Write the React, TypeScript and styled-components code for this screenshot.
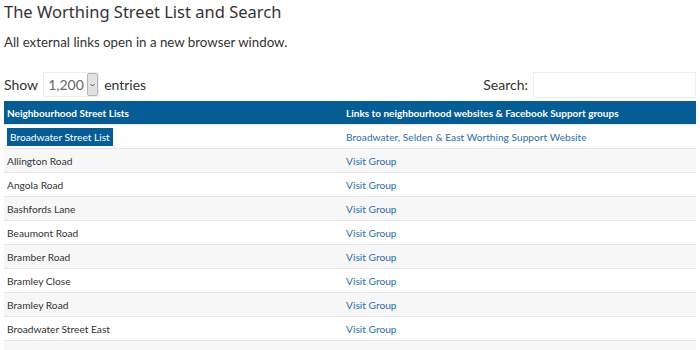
import styled, { createGlobalStyle } from "styled-components";

const GlobalStyle = createGlobalStyle`
  body {
    margin: 0;
    background: #ffffff;
    font-family: Lato, "Noto Sans", sans-serif;
    color: #333333;
  }
`;

const Page = styled.div`
  padding: 0 4px;
`;

const Title = styled.h2`
  margin: 0;
  padding-top: 1px;
  font-family: "Noto Sans", sans-serif;
  font-weight: 400;
  font-size: 16.5px;
  line-height: 22px;
  color: #333;
`;

const Intro = styled.p`
  margin: 9px 0 0;
  font-size: 13.3px;
  line-height: 20px;
  color: #333;
`;

const Controls = styled.div`
  display: flex;
  align-items: center;
  justify-content: space-between;
  margin-top: 19px;
  height: 27px;
  margin-bottom: 3px;
`;

const Length = styled.label`
  display: flex;
  align-items: center;
  gap: 5px;
  font-size: 14px;
`;

const SelectBox = styled.div`
  display: flex;
  align-items: stretch;
  height: 25px;
  width: 56px;
  border: 1px solid #eeeeee;
  box-sizing: border-box;
  font-size: 14px;
  color: #666;
`;

const SelectValue = styled.span`
  flex: 1;
  display: flex;
  align-items: center;
  padding-left: 4px;
`;

const SelectArrow = styled.span`
  width: 11px;
  display: flex;
  align-items: center;
  justify-content: center;
  background: #e2e2e2;
  border: 1px solid #b5b5b5;
  border-radius: 2px;
  box-sizing: border-box;
`;

const SearchLabel = styled.label`
  display: flex;
  align-items: center;
  gap: 5px;
  font-size: 14px;
`;

const SearchInput = styled.input`
  width: 163px;
  height: 26px;
  box-sizing: border-box;
  border: 1px solid #eeeeee;
  outline: none;
`;

const Table = styled.table`
  width: 100%;
  border-collapse: collapse;
  font-size: 10.2px;
`;

const HeadCell = styled.th<{ $w?: string }>`
  background: #065c94;
  color: #ffffff;
  font-weight: 700;
  font-size: 10px;
  text-align: left;
  height: 23px;
  padding: 0 3px;
  width: ${(p) => p.$w || "auto"};
`;

const Row = styled.tr<{ $striped: boolean }>`
  background: ${(p) => (p.$striped ? "#f7f7f7" : "#ffffff")};
  border-top: 1px solid #e6e6e6;
`;

const Cell = styled.td`
  height: 23px;
  padding: 0 3px;
  color: #333;
`;

const Link = styled.a`
  color: #2f6ea6;
  text-decoration: none;
`;

const Badge = styled.span`
  display: inline-block;
  background: #065c94;
  color: #fff;
  font-size: 10.2px;
  padding: 2px 3px;
  line-height: 14px;
`;

const streets = [
  "Allington Road",
  "Angola Road",
  "Bashfords Lane",
  "Beaumont Road",
  "Bramber Road",
  "Bramley Close",
  "Bramley Road",
  "Broadwater Street East",
  "Broadwater Street West",
];

export default function App() {
  return (
    <Page>
      <GlobalStyle />
      <Title>The Worthing Street List and Search</Title>
      <Intro>All external links open in a new browser window.</Intro>
      <Controls>
        <Length>
          Show
          <SelectBox>
            <SelectValue>1,200</SelectValue>
            <SelectArrow>
              <svg width="5" height="4" viewBox="0 0 5 4">
                <path d="M0.5 1 L2.5 3 L4.5 1" fill="none" stroke="#555" strokeWidth="1" />
              </svg>
            </SelectArrow>
          </SelectBox>
          entries
        </Length>
        <SearchLabel>
          Search:
          <SearchInput type="search" />
        </SearchLabel>
      </Controls>
      <Table>
        <thead>
          <tr>
            <HeadCell $w="49%">Neighbourhood Street Lists</HeadCell>
            <HeadCell>Links to neighbourhood websites &amp; Facebook Support groups</HeadCell>
          </tr>
        </thead>
        <tbody>
          <Row $striped={false}>
            <Cell>
              <Badge>Broadwater Street List</Badge>
            </Cell>
            <Cell>
              <Link href="#">Broadwater, Selden &amp; East Worthing Support Website</Link>
            </Cell>
          </Row>
          {streets.map((s, i) => (
            <Row key={s} $striped={i % 2 === 0}>
              <Cell>{s}</Cell>
              <Cell>
                <Link href="#">Visit Group</Link>
              </Cell>
            </Row>
          ))}
        </tbody>
      </Table>
    </Page>
  );
}
